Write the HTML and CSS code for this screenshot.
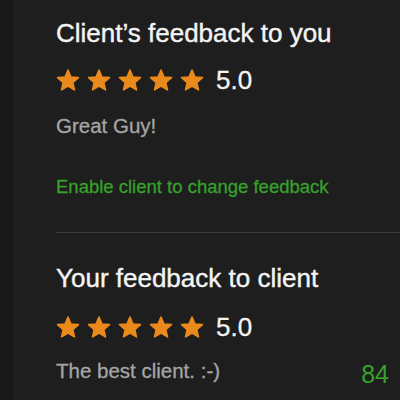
FILE: index.html
```html
<!DOCTYPE html>
<html lang="en">

<head>
    <meta charset="UTF-8">
    <meta name="viewport" content="width=device-width, initial-scale=1.0">
    <title>Feedback</title>

    <link rel="stylesheet" href="styles.css">
</head>

<body>
    <div class="page">
        <div class="side"></div>
        <div class="main">
            <div class="block">
                <h2>Client’s feedback to you</h2>
                <div class="rating">
                    <div class="stars">
                        <svg viewBox="0 0 24 24"><polygon points="12,2 14.94,8.96 22.46,9.6 16.76,14.55 18.47,21.9 12,18 5.53,21.9 7.24,14.55 1.54,9.6 9.06,8.96"/></svg>
                        <svg viewBox="0 0 24 24"><polygon points="12,2 14.94,8.96 22.46,9.6 16.76,14.55 18.47,21.9 12,18 5.53,21.9 7.24,14.55 1.54,9.6 9.06,8.96"/></svg>
                        <svg viewBox="0 0 24 24"><polygon points="12,2 14.94,8.96 22.46,9.6 16.76,14.55 18.47,21.9 12,18 5.53,21.9 7.24,14.55 1.54,9.6 9.06,8.96"/></svg>
                        <svg viewBox="0 0 24 24"><polygon points="12,2 14.94,8.96 22.46,9.6 16.76,14.55 18.47,21.9 12,18 5.53,21.9 7.24,14.55 1.54,9.6 9.06,8.96"/></svg>
                        <svg viewBox="0 0 24 24"><polygon points="12,2 14.94,8.96 22.46,9.6 16.76,14.55 18.47,21.9 12,18 5.53,21.9 7.24,14.55 1.54,9.6 9.06,8.96"/></svg>
                    </div>
                    <span class="score">5.0</span>
                </div>
                <p class="comment">Great Guy!</p>
                <a class="enable" href="#">Enable client to change feedback</a>
            </div>

            <hr class="divider">

            <div class="block second">
                <h2>Your feedback to client</h2>
                <div class="rating">
                    <div class="stars">
                        <svg viewBox="0 0 24 24"><polygon points="12,2 14.94,8.96 22.46,9.6 16.76,14.55 18.47,21.9 12,18 5.53,21.9 7.24,14.55 1.54,9.6 9.06,8.96"/></svg>
                        <svg viewBox="0 0 24 24"><polygon points="12,2 14.94,8.96 22.46,9.6 16.76,14.55 18.47,21.9 12,18 5.53,21.9 7.24,14.55 1.54,9.6 9.06,8.96"/></svg>
                        <svg viewBox="0 0 24 24"><polygon points="12,2 14.94,8.96 22.46,9.6 16.76,14.55 18.47,21.9 12,18 5.53,21.9 7.24,14.55 1.54,9.6 9.06,8.96"/></svg>
                        <svg viewBox="0 0 24 24"><polygon points="12,2 14.94,8.96 22.46,9.6 16.76,14.55 18.47,21.9 12,18 5.53,21.9 7.24,14.55 1.54,9.6 9.06,8.96"/></svg>
                        <svg viewBox="0 0 24 24"><polygon points="12,2 14.94,8.96 22.46,9.6 16.76,14.55 18.47,21.9 12,18 5.53,21.9 7.24,14.55 1.54,9.6 9.06,8.96"/></svg>
                    </div>
                    <span class="score">5.0</span>
                </div>
                <div class="comment-row">
                    <p class="comment">The best client. :-)</p>
                    <span class="count">84</span>
                </div>
            </div>
        </div>
    </div>
</body>

</html>
```

FILE: styles.css
```css
* {
    padding: 0;
    margin: 0;
    box-sizing: border-box;
}

body {
    background-color: #1e1e1e;
    font-family: "Liberation Sans", Arial, sans-serif;
    overflow: hidden;
}

.page {
    display: flex;
    height: 400px;
}

.side {
    width: 13px;
    background-color: #181818;
}

.main {
    flex: 1;
    padding-left: 43px;
}

.block {
    padding-top: 18px;
}

.block.second {
    padding-top: 30px;
}

h2 {
    font-size: 26px;
    line-height: 30px;
    font-weight: normal;
    color: #f4f4f4;
    -webkit-text-stroke: 0.4px #f4f4f4;
}

.rating {
    display: flex;
    align-items: center;
    height: 24px;
    margin-top: 20px;
}

.second .rating {
    margin-top: 22px;
}

.stars {
    display: flex;
    gap: 7px;
}

.stars svg {
    width: 24px;
    height: 24px;
    display: block;
}

.stars polygon {
    fill: #ea8a1c;
    stroke: #ea8a1c;
    stroke-width: 1.6;
    stroke-linejoin: round;
}

.score {
    margin-left: 12px;
    font-size: 26px;
    line-height: 24px;
    color: #f4f4f4;
    -webkit-text-stroke: 0.3px #f4f4f4;
}

.comment {
    margin-top: 22px;
    font-size: 20.5px;
    line-height: 24px;
    color: #a6a6a6;
    -webkit-text-stroke: 0.3px #a6a6a6;
}

.enable {
    display: block;
    margin-top: 38px;
    font-size: 18.5px;
    line-height: 22px;
    color: #36a12b;
    -webkit-text-stroke: 0.3px #36a12b;
    text-decoration: none;
}

.divider {
    border: none;
    border-top: 1px solid #3a3a3a;
    margin-top: 34px;
}

.comment-row {
    display: flex;
    justify-content: space-between;
    align-items: flex-start;
    margin-top: 20px;
    padding-right: 11px;
}

.comment-row .comment {
    margin-top: 0;
}

.count {
    margin-top: 1px;
    font-size: 25px;
    line-height: 28px;
    color: #36a12b;
}
```
